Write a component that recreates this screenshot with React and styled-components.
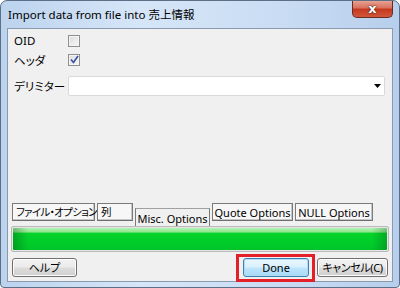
import React from 'react'
import styled, { createGlobalStyle } from 'styled-components'

const Global = createGlobalStyle`
    html, body {
        margin: 0;
        padding: 0;
        background: #ffffff;
    }
    body {
        font-family: "Noto Sans", "Noto Sans CJK JP", sans-serif;
        font-size: 11px;
        font-feature-settings: "palt";
        color: #000;
    }
`;

const Window = styled.div`
    box-sizing: border-box;
    width: 400px;
    height: 288px;
    border: 1px solid #5c6f86;
    border-radius: 7px 7px 4px 4px;
    background: linear-gradient(90deg, #bcd3ee 0%, #d6e6f8 35%, #c9dcf3 70%, #b7cfec 100%);
    display: flex;
    flex-direction: column;
    overflow: hidden;
`;

const TitleBar = styled.div`
    height: 27px;
    display: flex;
    align-items: flex-start;
    justify-content: space-between;
    padding-left: 7px;
`;

const Title = styled.div`
    padding-top: 5px;
    font-size: 11.5px;
    color: #000;
    white-space: nowrap;
`;

const CloseButton = styled.div`
    width: 41px;
    height: 18px;
    margin-right: 6px;
    margin-top: -1px;
    box-sizing: border-box;
    border: 1px solid #6b2b22;
    border-top: none;
    border-radius: 0 0 5px 5px;
    background: linear-gradient(180deg, #e9a89a 0%, #d8735f 45%, #c5391f 55%, #d0583c 100%);
    display: flex;
    align-items: center;
    justify-content: center;
    color: #fff;
    font: bold 13px "DejaVu Sans", sans-serif;
    text-shadow: 0 0 2px #4a1c14, 0 0 1px #4a1c14;
`;

const Client = styled.div`
    flex: 1;
    margin: 0 6px 5px 6px;
    border: 1px solid #8a9bb0;
    background: #f0f0f0;
    display: flex;
    flex-direction: column;
`;

const Form = styled.div`
    padding: 2px 6px 0 6px;
    display: flex;
    flex-direction: column;
`;

const Row = styled.div`
    height: ${p => p.h || 19}px;
    margin-top: ${p => p.mt || 0}px;
    display: grid;
    grid-template-columns: 54px 1fr;
    align-items: center;
`;

const Label = styled.span`
    font-size: 11.5px;
    white-space: nowrap;
`;

const Check = styled.span`
    box-sizing: border-box;
    width: 12px;
    height: 12px;
    border: 1px solid #8f8f8f;
    background: linear-gradient(135deg, #dcdcdc 0%, #f6f6f6 100%);
    box-shadow: inset 0 0 0 1px #f4f4f4;
    display: flex;
    align-items: center;
    justify-content: center;
`;

const Select = styled.div`
    box-sizing: border-box;
    height: 20px;
    margin-right: 1px;
    border: 1px solid #d9d9d9;
    border-radius: 2px;
    background: #ffffff;
    display: flex;
    align-items: center;
    justify-content: flex-end;
    padding-right: 3px;
`;

const Bottom = styled.div`
    margin-top: auto;
    display: flex;
    flex-direction: column;
    padding: 0 3px 4px 3px;
`;

const TabStrip = styled.div`
    height: 23px;
    display: flex;
    align-items: flex-start;
    gap: 2px;
    padding-left: 1px;
`;

const Tab = styled.div`
    box-sizing: border-box;
    flex: none;
    width: ${p => p.w}px;
    height: ${p => (p.active ? 19 : 18)}px;
    margin-top: ${p => (p.active ? 5 : 0)}px;
    border: 1px solid #7a7a7a;
    border-top-color: ${p => (p.active ? '#a0a0a0' : '#7a7a7a')};
    border-bottom: ${p => (p.active ? 'none' : '1px solid #6e6e6e')};
    background: ${p => (p.active ? '#f0f0f0' : '#f7f7f7')};
    box-shadow: ${p => (p.active ? 'none' : 'inset -1px -1px 0 #c6c6c6')};
    display: flex;
    align-items: center;
    justify-content: ${p => (p.left ? 'flex-start' : 'center')};
    padding-left: ${p => (p.left ? 3 : 0)}px;
    font-size: ${p => (p.left ? 10.5 : 11)}px;
    letter-spacing: ${p => (p.left ? -0.7 : 0)}px;
    line-height: 1;
    white-space: nowrap;
`;

const Progress = styled.div`
    box-sizing: border-box;
    height: 26px;
    border: 1px solid #b9b9b9;
    border-radius: 2px;
    background: #e6e6e6;
    padding: 1px;
`;

const Fill = styled.div`
    height: 100%;
    border-radius: 1px;
    background:
        linear-gradient(90deg, rgba(0,80,20,0.35) 0%, rgba(0,0,0,0) 4%, rgba(0,0,0,0) 96%, rgba(0,80,20,0.3) 100%),
        linear-gradient(180deg, #b4f0b4 0%, #8ee88e 18%, #06d22a 24%, #00cc2a 70%, #00c428 100%);
`;

const ButtonRow = styled.div`
    margin-top: 6px;
    display: flex;
    align-items: center;
    padding: 0 1px;
`;

const Button = styled.button`
    box-sizing: border-box;
    height: 19px;
    width: ${p => p.w}px;
    margin: 0;
    padding: 0;
    border: 1px solid ${p => (p.primary ? '#3c7fb1' : '#707070')};
    border-radius: 3px;
    background: ${p => (p.primary
        ? 'linear-gradient(180deg, #eaf6fd 0%, #d9f0fc 48%, #bee6fd 52%, #a7d9f5 100%)'
        : 'linear-gradient(180deg, #f2f2f2 0%, #ebebeb 48%, #dddddd 52%, #cfcfcf 100%)')};
    box-shadow: inset 0 0 0 1px ${p => (p.primary ? '#b0dcf5' : '#fcfcfc')};
    font-family: "Noto Sans", "Noto Sans CJK JP", sans-serif;
    font-feature-settings: "palt";
    font-size: 11px;
    letter-spacing: ${p => (p.tight ? -0.4 : 0)}px;
    line-height: 1;
    white-space: nowrap;
    color: #000;
`;

const Highlight = styled.div`
    position: relative;
    margin-left: auto;
    margin-right: 8px;
    display: flex;
    &::after {
        content: '';
        position: absolute;
        left: -7px;
        right: -6px;
        top: -4px;
        bottom: -5px;
        border: 3px solid #e3202a;
        pointer-events: none;
    }
`;

const CheckMark = () => (
    <svg width="9" height="9" viewBox="0 0 9 9">
        <path d="M1 4.5 L3.5 7.5 L8 1" fill="none" stroke="#3a4f9e" strokeWidth="1.6" />
    </svg>
);

const Arrow = () => (
    <svg width="7" height="4" viewBox="0 0 7 4">
        <path d="M0 0 H7 L3.5 4 Z" fill="#000" />
    </svg>
);

const tabs = [
    { t: 'ファイル・オプション', w: 83, left: true },
    { t: '列', w: 36, left: true },
    { t: 'Misc. Options', w: 75, active: true },
    { t: 'Quote Options', w: 81 },
    { t: 'NULL Options', w: 78 },
];

const App = () => {
    return (
        <>
            <Global />
            <Window>
                <TitleBar>
                    <Title>Import data from file into 売上情報</Title>
                    <CloseButton>x</CloseButton>
                </TitleBar>
                <Client>
                    <Form>
                        <Row>
                            <Label>OID</Label>
                            <Check />
                        </Row>
                        <Row>
                            <Label>ヘッダ</Label>
                            <Check><CheckMark /></Check>
                        </Row>
                        <Row h={21} mt={6}>
                            <Label>デリミター</Label>
                            <Select><Arrow /></Select>
                        </Row>
                    </Form>
                    <Bottom>
                        <TabStrip>
                            {tabs.map((tab, i) => (
                                <Tab key={i} w={tab.w} active={tab.active} left={tab.left}>{tab.t}</Tab>
                            ))}
                        </TabStrip>
                        <Progress><Fill /></Progress>
                        <ButtonRow>
                            <Button w={65}>ヘルプ</Button>
                            <Highlight>
                                <Button w={66} primary>Done</Button>
                            </Highlight>
                            <Button w={71} tight>キャンセル(C)</Button>
                        </ButtonRow>
                    </Bottom>
                </Client>
            </Window>
        </>
    )
}

export default App
